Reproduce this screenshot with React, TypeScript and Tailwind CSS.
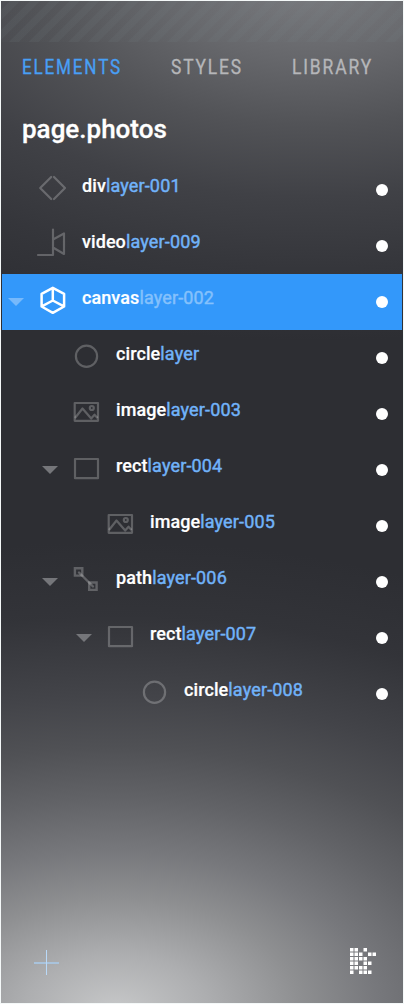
import React from "react";

type Kind = "div" | "video" | "canvas" | "circle" | "image" | "rect" | "path";

interface Layer {
  kind: Kind;
  name: string;
  depth: 0 | 1 | 2 | 3;
  open?: boolean;
  selected?: boolean;
}

const layers: Layer[] = [
  { kind: "div", name: "layer-001", depth: 0 },
  { kind: "video", name: "layer-009", depth: 0 },
  { kind: "canvas", name: "layer-002", depth: 0, open: true, selected: true },
  { kind: "circle", name: "layer", depth: 1 },
  { kind: "image", name: "layer-003", depth: 1 },
  { kind: "rect", name: "layer-004", depth: 1, open: true },
  { kind: "image", name: "layer-005", depth: 2 },
  { kind: "path", name: "layer-006", depth: 1, open: true },
  { kind: "rect", name: "layer-007", depth: 2, open: true },
  { kind: "circle", name: "layer-008", depth: 3 },
];

const indents = ["pl-0", "pl-[34px]", "pl-[68px]", "pl-[102px]"];

function LayerIcon({ kind }: { kind: Kind }) {
  return (
    <svg
      width="32"
      height="32"
      viewBox="0 0 32 32"
      fill="none"
      stroke="currentColor"
      strokeWidth="2.2"
      strokeLinecap="round"
      strokeLinejoin="round"
      className="shrink-0"
    >
      {kind === "div" && <path d="M15.2 5 4.2 16 15.2 27M18 5 29 16 18 27" />}
      {kind === "video" && (
        <path d="M17 1.5V27H2M17 11.5 28 5.5V26L17 19.5" />
      )}
      {kind === "canvas" && (
        <path
          d="M16.8 3.8 28.1 9.8V22.5L16.8 28.8 5.6 22.5V9.8ZM16.8 4V16.5L5.8 22.3M16.8 16.5 27.9 22.3"
          strokeWidth="2.5"
        />
      )}
      {kind === "circle" && <circle cx="16.5" cy="16.3" r="10.6" />}
      {kind === "image" && (
        <g strokeLinecap="butt">
          <path d="M4.7 7H28V24.8H4.7Z" />
          <path d="M5 22 12.5 12.5 21.2 22.5 24.5 18.7 27.5 22" />
          <circle cx="21.8" cy="12" r="2" />
        </g>
      )}
      {kind === "rect" && <path d="M5 7H28V26.2H5Z" />}
      {kind === "path" && (
        <g strokeLinejoin="miter" strokeWidth="2.4">
          <path d="M4.9 4.2H12.3V11.6H4.9ZM19.2 18.5H26.6V25.9H19.2Z" />
          <path d="M9 8.5 23 22.5" />
        </g>
      )}
    </svg>
  );
}

function Tab({ label, width, color }: { label: string; width: number; color: string }) {
  return (
    <svg width={width} height="24" className={`block overflow-visible ${color}`}>
      <text
        x="0"
        y="18"
        textLength={width}
        lengthAdjust="spacingAndGlyphs"
        fill="currentColor"
        stroke="currentColor"
        strokeWidth="0.35"
        className="font-['Roboto',sans-serif] text-[20.5px] tracking-[2.2px]"
      >
        {label}
      </text>
    </svg>
  );
}

function LayerRow({ layer }: { layer: Layer }) {
  return (
    <div
      className={`flex h-14 items-center pr-[14px] ${layer.selected ? "bg-[#3398fa]" : ""}`}
    >
      <div className={`flex flex-1 items-center ${indents[layer.depth]}`}>
        <div className={`flex w-[34px] pl-[6px] ${layer.selected ? "text-[#77b9fb]" : "text-[#75767a]"}`}>
          {layer.open && (
            <svg width="16" height="8" className="block">
              <path d="M0 0H16L8 8Z" fill="currentColor" />
            </svg>
          )}
        </div>
        <div className={`-mt-1 ${layer.selected ? "text-white" : "text-white/24"}`}>
          <LayerIcon kind={layer.kind} />
        </div>
        <div className="ml-[14px] -mt-2 whitespace-nowrap text-[18px] leading-6">
          <span className="font-medium tracking-[0.08px] text-white [-webkit-text-stroke:0.2px_white]">{layer.kind}</span>
          <span
            className={`tracking-[0.15px] ${
              layer.selected
                ? "text-[#85c1fc] [-webkit-text-stroke:0.45px_#85c1fc]"
                : "text-[#71b3fa] [-webkit-text-stroke:0.45px_#71b3fa]"
            }`}
          >
            {layer.name}
          </span>
        </div>
      </div>
      <span className="size-3 rounded-full bg-white" />
    </div>
  );
}

const pixelRows = ["11.1..", "111.11", "1111..", "11.11.", "1111..", "1.111."];

export default function App() {
  return (
    <div className="h-[1004px] w-[404px] bg-[#f4f8f8] p-px font-['Roboto',sans-serif]">
      <div className="flex h-full w-full flex-col bg-[#2d2e33] bg-[radial-gradient(770px_470px_at_115px_1010px,#c7c8c9_0%,#adaeb0_12%,#8e8f91_24%,#77787c_34%,#626367_45%,#505155_56%,#434449_67%,#34353acc_84%,#2d2e3300_100%),radial-gradient(680px_360px_at_310px_-20px,#7b7c80_0%,#66676b_22%,#525357_40%,#404146_60%,#35363b_80%,#2d2e33_100%)]">
        <div className="h-[41px] shrink-0 bg-[repeating-linear-gradient(135deg,#78868a08_0px,#78868a08_6px,#78868a22_7px,#78868a22_13px,#78868a08_14px)]" />
        <div className="flex h-[48px] shrink-0 items-center pl-[21px] pt-[4px]">
          <Tab label="ELEMENTS" width={100} color="text-[#489ff5]" />
          <div className="w-[49px]" />
          <Tab label="STYLES" width={72} color="text-[#b5b6b9]" />
          <div className="w-[49px]" />
          <Tab label="LIBRARY" width={81} color="text-[#b5b6b9]" />
        </div>
        <h1 className="h-[72px] shrink-0 pl-[21px] pt-[21px] text-[26px] font-medium leading-9 text-white [-webkit-text-stroke:0.3px_white]">
          page.photos
        </h1>
        <div className="flex flex-col px-px">
          {layers.map((layer, i) => (
            <LayerRow key={i} layer={layer} />
          ))}
        </div>
        <div className="mt-auto flex items-center justify-between pb-[28px] pl-[33px] pr-[26px]">
          <svg width="26" height="26" className="block translate-y-px">
            <path d="M0 13H25" stroke="#a9c3dc" strokeWidth="2" />
            <path d="M12.5 0V25" stroke="#b9d9f8" strokeWidth="1" />
          </svg>
          <svg width="27" height="27" className="block" fill="white">
            {pixelRows.map((row, y) =>
              row.split("").map((cell, x) =>
                cell === "1" ? <rect key={`${x}-${y}`} x={x * 4.5} y={y * 4.5} width="3.5" height="3.5" /> : null,
              ),
            )}
          </svg>
        </div>
      </div>
    </div>
  );
}
